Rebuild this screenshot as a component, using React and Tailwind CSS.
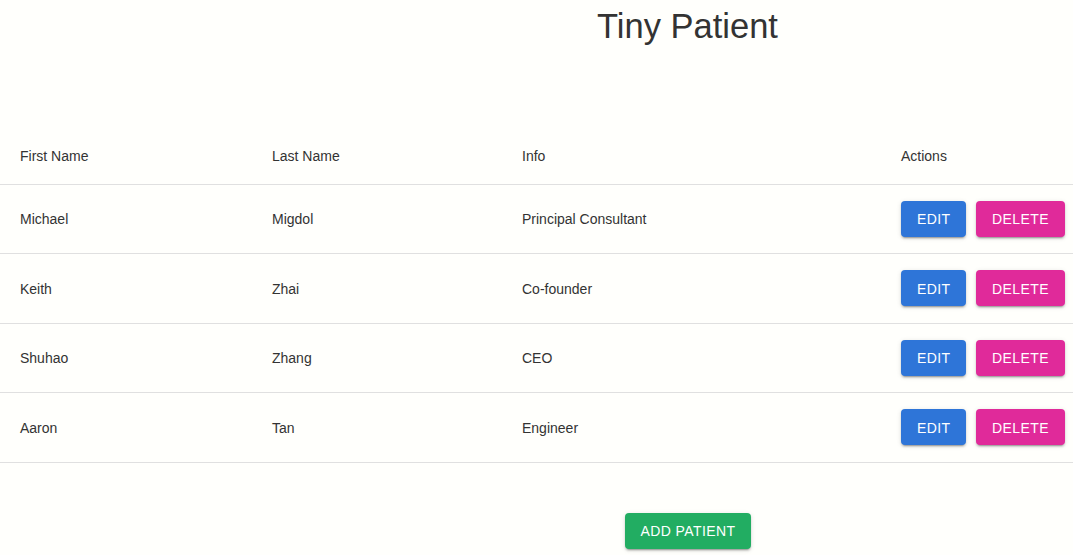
import React from "react";

const patients = [
  { first: "Michael", last: "Migdol", info: "Principal Consultant" },
  { first: "Keith", last: "Zhai", info: "Co-founder" },
  { first: "Shuhao", last: "Zhang", info: "CEO" },
  { first: "Aaron", last: "Tan", info: "Engineer" },
];

const btn =
  "h-9 whitespace-nowrap rounded px-4 pt-[2px] text-[14px] tracking-[0.4px] uppercase text-white shadow-[0_3px_1px_-2px_rgba(0,0,0,0.2),0_2px_2px_0_rgba(0,0,0,0.14),0_1px_5px_0_rgba(0,0,0,0.12)]";

const App = () => {
  return (
    <div className="min-h-[555px] bg-[#fffffc] font-['Liberation_Sans',Arial,sans-serif] text-[#333]">
      <div className="flex justify-center pl-[302px] pt-[5px]">
        <h1 className="text-[34.5px] leading-[42px] text-[#333]">Tiny Patient</h1>
      </div>

      <table className="mt-[81px] w-full border-collapse text-[14px]">
        <thead>
          <tr className="h-[56px] border-b border-[#e0e0e0] text-left">
            <th className="w-[252px] pl-5 pt-[2px] font-normal">First Name</th>
            <th className="w-[250px] pl-5 pt-[2px] font-normal">Last Name</th>
            <th className="w-[379px] pl-5 pt-[2px] font-normal">Info</th>
            <th className="pl-5 pt-[2px] font-normal">Actions</th>
          </tr>
        </thead>
        <tbody>
          {patients.map((p) => (
            <tr key={p.first} className="h-[69.5px] border-b border-[#e0e0e0]">
              <td className="pl-5 pt-[2px]">{p.first}</td>
              <td className="pl-5 pt-[2px]">{p.last}</td>
              <td className="pl-5 pt-[2px]">{p.info}</td>
              <td className="pl-5">
                <div className="flex gap-[10px]">
                  <button className={`${btn} w-[65px] bg-[#2e75d8]`}>Edit</button>
                  <button className={`${btn} w-[89px] bg-[#e02a9a]`}>Delete</button>
                </div>
              </td>
            </tr>
          ))}
        </tbody>
      </table>

      <div className="mt-[50px] flex justify-center pl-[302px]">
        <button className={`${btn} w-[126px] bg-[#22ad62]`}>Add Patient</button>
      </div>
    </div>
  );
};

export default App;
